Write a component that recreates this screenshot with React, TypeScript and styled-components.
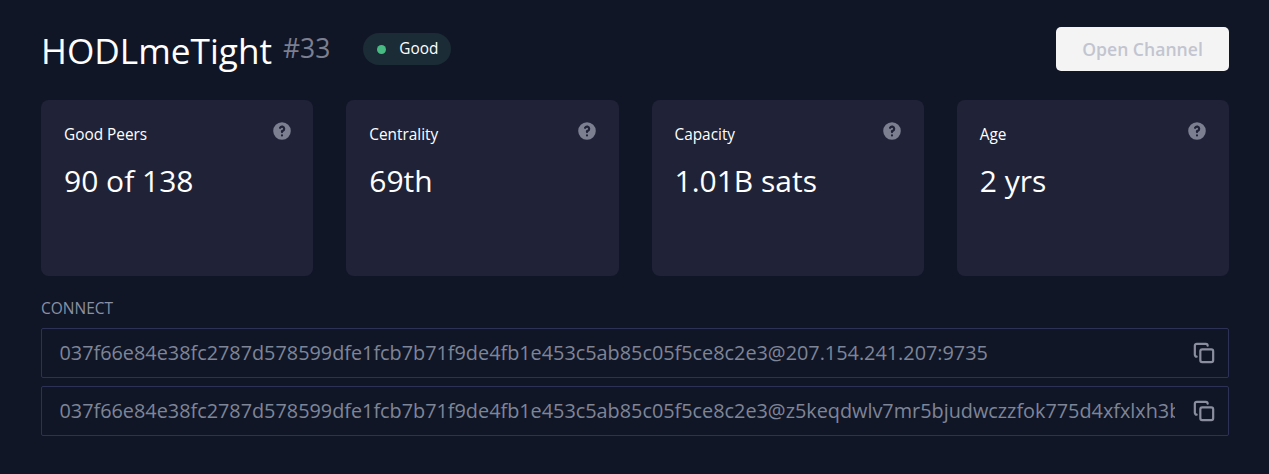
import React from 'react';
import styled, { createGlobalStyle } from 'styled-components';
import { Copy } from 'lucide-react';

const GlobalStyle = createGlobalStyle`
  html, body {
    margin: 0;
    padding: 0;
    background: #111627;
    font-family: "Open Sans", "Noto Sans", sans-serif;
  }
`;

const Page = styled.div`
  box-sizing: border-box;
  width: 1269px;
  height: 474px;
  padding: 27px 40px 0 41px;
  background: #111627;
`;

const Header = styled.header`
  display: flex;
  align-items: flex-start;
  justify-content: space-between;
  height: 44px;
`;

const TitleGroup = styled.div`
  display: flex;
  align-items: flex-start;
`;

const Title = styled.h1`
  margin: 0;
  font-size: 35.2px;
  line-height: 46px;
  font-weight: 400;
  color: #ffffff;
`;

const Rank = styled.span`
  margin: 0 0 0 11px;
  font-size: 26.4px;
  line-height: 43px;
  color: #7c7f90;
`;

const Badge = styled.div`
  display: flex;
  align-items: center;
  box-sizing: border-box;
  height: 32px;
  margin: 6px 0 0 33px;
  padding: 0 13px 2px 14px;
  border-radius: 16px;
  background: #1b2c36;
  font-size: 15.36px;
  color: #ffffff;
`;

const Dot = styled.span`
  width: 9px;
  height: 9px;
  margin: 2px 13px 0 0;
  border-radius: 50%;
  background: #48bb82;
`;

const OpenButton = styled.button`
  width: 173px;
  height: 44px;
  border: none;
  border-radius: 5px;
  background: #f4f4f5;
  color: #c2c5cf;
  font-family: inherit;
  font-size: 17.6px;
  font-weight: 600;
`;

const Stats = styled.section`
  display: grid;
  grid-template-columns: repeat(4, 1fr);
  gap: 33px;
  margin-top: 29px;
`;

const Card = styled.div`
  box-sizing: border-box;
  height: 176px;
  padding: 23px;
  border-radius: 8px;
  background: #202338;
`;

const CardTop = styled.div`
  display: flex;
  align-items: flex-start;
  justify-content: space-between;
  height: 20px;
`;

const CardLabel = styled.div`
  font-size: 15.36px;
  line-height: 23px;
  color: #ffffff;
`;

const HelpIcon = styled.svg`
  width: 22px;
  height: 22px;
  margin: -3px -2.25px 0 0;
  color: #7c7f90;
`;

const CardValue = styled.div`
  margin-top: 17px;
  font-size: 30px;
  line-height: 42px;
  color: #ffffff;
`;

const ConnectLabel = styled.div`
  margin-top: 22px;
  font-size: 15.5px;
  line-height: 20px;
  color: #8a90a3;
`;

const AddressList = styled.div`
  display: flex;
  flex-direction: column;
  gap: 8px;
  margin-top: 10px;
`;

const AddressRow = styled.div`
  box-sizing: border-box;
  display: flex;
  align-items: center;
  height: 50px;
  padding: 0 13px 0 17.5px;
  border: 1px solid #2d3156;
  border-radius: 2px;
`;

const AddressText = styled.div`
  flex: 1;
  min-width: 0;
  padding-bottom: 2px;
  overflow: hidden;
  white-space: nowrap;
  font-size: 19.84px;
  color: #7e8597;
`;

const CopyButton = styled.span`
  display: flex;
  flex: none;
  margin-left: 18px;
  color: #8a8e9e;
`;

const stats = [
  { label: 'Good Peers', value: '90 of 138' },
  { label: 'Centrality', value: '69th' },
  { label: 'Capacity', value: '1.01B sats' },
  { label: 'Age', value: '2 yrs' },
];

const addresses = [
  '037f66e84e38fc2787d578599dfe1fcb7b71f9de4fb1e453c5ab85c05f5ce8c2e3@207.154.241.207:9735',
  '037f66e84e38fc2787d578599dfe1fcb7b71f9de4fb1e453c5ab85c05f5ce8c2e3@z5keqdwlv7mr5bjudwczzfok775d4xfxlxh3bqd.onion:9735',
];

const Help = () => (
  <HelpIcon viewBox="0 0 20 20" fill="currentColor">
    <path
      fillRule="evenodd"
      clipRule="evenodd"
      d="M18 10a8 8 0 1 1-16 0 8 8 0 0 1 16 0zm-8-3a1 1 0 0 0-.867.5 1 1 0 1 1-1.731-1A3 3 0 0 1 13 8a3 3 0 0 1-2 2.83V11a1 1 0 1 1-2 0v-1a1 1 0 0 1 1-1 1 1 0 1 0 0-2zm0 8a1 1 0 1 0 0-2 1 1 0 0 0 0 2z"
    />
  </HelpIcon>
);

export default function App() {
  return (
    <Page>
      <GlobalStyle />
      <Header>
        <TitleGroup>
          <Title>HODLmeTight</Title>
          <Rank>#33</Rank>
          <Badge>
            <Dot />
            Good
          </Badge>
        </TitleGroup>
        <OpenButton disabled>Open Channel</OpenButton>
      </Header>
      <Stats>
        {stats.map((stat) => (
          <Card key={stat.label}>
            <CardTop>
              <CardLabel>{stat.label}</CardLabel>
              <Help />
            </CardTop>
            <CardValue>{stat.value}</CardValue>
          </Card>
        ))}
      </Stats>
      <ConnectLabel>CONNECT</ConnectLabel>
      <AddressList>
        {addresses.map((address) => (
          <AddressRow key={address}>
            <AddressText>{address}</AddressText>
            <CopyButton>
              <Copy size={22} strokeWidth={2.4} />
            </CopyButton>
          </AddressRow>
        ))}
      </AddressList>
    </Page>
  );
}
